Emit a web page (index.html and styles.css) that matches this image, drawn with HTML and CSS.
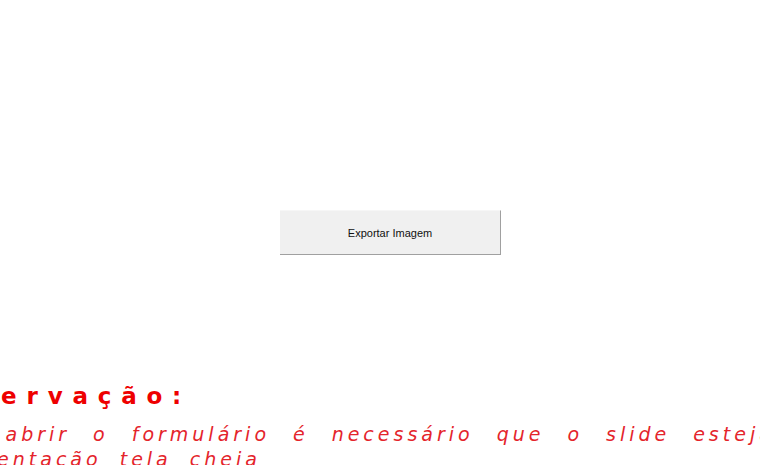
FILE: index.html
```html
<!DOCTYPE html>
<html lang="pt">
<head>
<meta charset="utf-8">
<link rel="stylesheet" href="styles.css">
</head>
<body>
<main class="page">
  <div class="actions">
    <button class="export-btn" type="button">Exportar Imagem</button>
  </div>
  <div class="note-frame">
    <section class="note">
      <h2 class="note-title">Observação:</h2>
      <p class="note-text">Para abrir o formulário é necessário que o slide esteja em apresentação tela cheia</p>
    </section>
  </div>
</main>
</body>
</html>
```
FILE: styles.css
```css
html, body {
  margin: 0;
  padding: 0;
  background: #ffffff;
  overflow: hidden;
  width: 780px;
  height: 465px;
}
.page {
  width: 780px;
  height: 465px;
  overflow: hidden;
}
.actions {
  display: flex;
  justify-content: center;
  padding-top: 210px;
  padding-left: 1px;
}
.export-btn {
  width: 221px;
  height: 45px;
  margin: 0;
  padding: 1px 0 0;
  background: #f0f0f0;
  border: none;
  border-top: 1px solid #f6f6f6;
  border-right: 1px solid #a0a0a0;
  border-bottom: 1px solid #a0a0a0;
  box-sizing: border-box;
  font-family: "Liberation Sans", Arial, sans-serif;
  font-size: 11px;
  color: #111;
}
.note-frame {
  width: 760px;
  overflow: hidden;
  margin-top: 127px;
}
.note {
  margin-left: -76px;
  width: 912px;
}
.note-title {
  margin: 0 0 0 -2px;
  font-family: "DejaVu Sans", sans-serif;
  font-weight: bold;
  font-size: 23px;
  letter-spacing: 9.8px;
  color: #ee0000;
  line-height: 28px;
}
.note-text {
  margin: 12px 0 0;
  font-family: "DejaVu Sans", sans-serif;
  font-style: italic;
  font-weight: 200;
  font-size: 19px;
  letter-spacing: 4px;
  line-height: 25px;
  text-align: justify;
  text-align-last: left;
  color: #e4242b;
  word-spacing: 8px;
}
```
